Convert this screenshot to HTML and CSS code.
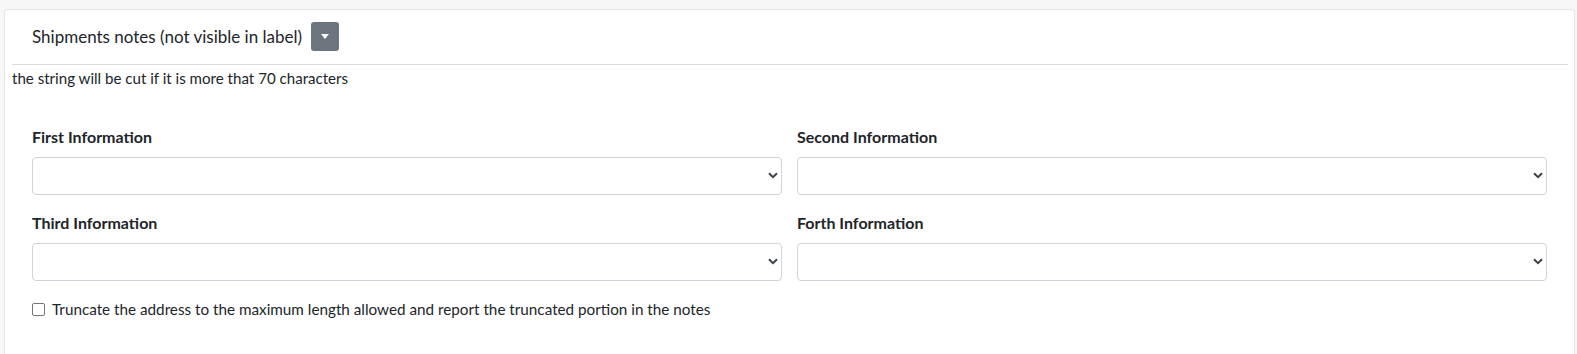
FILE: index.html
```html
<!DOCTYPE html>
<html>
<head>
<meta charset="utf-8">
<link rel="stylesheet" href="styles.css">
</head>
<body>
<div class="card">
  <div class="card-header">
    <h3 class="card-title">Shipments notes (not visible in label)</h3>
    <button class="btn-drop" type="button">
      <svg width="8" height="5" viewBox="0 0 8 5"><path d="M0 0h8L4 5z" fill="#fff"/></svg>
    </button>
  </div>
  <hr class="divider">
  <p class="hint">the string will be cut if it is more that 70 characters</p>
  <form class="card-body">
    <div class="grid">
      <div class="form-group">
        <label class="lbl">First Information</label>
        <div class="select-wrap">
          <select class="form-select"><option></option></select>
          <svg class="chev" width="10" height="7" viewBox="0 0 10 7"><path d="M1 1.2l4 4 4-4" fill="none" stroke="#3c4248" stroke-width="2"/></svg>
        </div>
      </div>
      <div class="form-group">
        <label class="lbl">Second Information</label>
        <div class="select-wrap">
          <select class="form-select"><option></option></select>
          <svg class="chev" width="10" height="7" viewBox="0 0 10 7"><path d="M1 1.2l4 4 4-4" fill="none" stroke="#3c4248" stroke-width="2"/></svg>
        </div>
      </div>
      <div class="form-group">
        <label class="lbl">Third Information</label>
        <div class="select-wrap">
          <select class="form-select"><option></option></select>
          <svg class="chev" width="10" height="7" viewBox="0 0 10 7"><path d="M1 1.2l4 4 4-4" fill="none" stroke="#3c4248" stroke-width="2"/></svg>
        </div>
      </div>
      <div class="form-group">
        <label class="lbl">Forth Information</label>
        <div class="select-wrap">
          <select class="form-select"><option></option></select>
          <svg class="chev" width="10" height="7" viewBox="0 0 10 7"><path d="M1 1.2l4 4 4-4" fill="none" stroke="#3c4248" stroke-width="2"/></svg>
        </div>
      </div>
    </div>
    <label class="check">
      <span class="box"></span>
      <span class="check-text">Truncate the address to the maximum length allowed and report the truncated portion in the notes</span>
    </label>
  </form>
</div>
</body>
</html>
```
FILE: styles.css
```css
* { box-sizing: border-box; }
html, body { margin: 0; padding: 0; }
body {
  background: #f7f7f8;
  font-family: "Lato", "Liberation Sans", sans-serif;
  color: #212529;
  height: 354px;
  overflow: hidden;
}
.card {
  margin: 9px 2px 0 4px;
  background: #fff;
  border: 1px solid #e4e4e4;
  border-bottom: none;
  border-radius: 4px 4px 0 0;
  height: 345px;
}
.card-header {
  display: flex;
  align-items: center;
  gap: 9px;
  padding: 12px 0 13px 27px;
}
.card-title {
  margin: 0;
  font-size: 17px;
  font-weight: 400;
  line-height: 22px;
}
.btn-drop {
  width: 28px;
  height: 29px;
  border: none;
  border-radius: 3px;
  background: #6c757d;
  padding: 0;
  display: flex;
  align-items: center;
  justify-content: center;
}
.divider {
  margin: 0 6px 0 7px;
  border: none;
  border-top: 1px solid #dcdcdc;
  height: 0;
}
.hint {
  margin: 3px 0 0 7px;
  font-size: 15.1px;
  line-height: 21px;
}
.card-body {
  padding: 36px 27px 0 27px;
}
.grid {
  display: grid;
  grid-template-columns: 1fr 1fr;
  column-gap: 15px;
}
.form-group {
  margin-bottom: 16px;
}
.lbl {
  display: block;
  font-weight: 700;
  font-size: 16px;
  line-height: 24px;
  margin-bottom: 8px;
}
.select-wrap {
  position: relative;
}
.form-select {
  display: block;
  width: 100%;
  height: 38px;
  appearance: none;
  -webkit-appearance: none;
  background: #fff;
  border: 1px solid #ced4da;
  border-radius: 4px;
  font-family: inherit;
  font-size: 16px;
}
.chev {
  position: absolute;
  right: 4px;
  top: 15px;
}
.check {
  display: flex;
  align-items: center;
  gap: 7px;
  margin-top: 0;
}
.box {
  width: 13px;
  height: 13px;
  border: 1px solid #767676;
  border-radius: 2px;
}
.check-text {
  font-size: 15.25px;
  line-height: 24px;
}
```
